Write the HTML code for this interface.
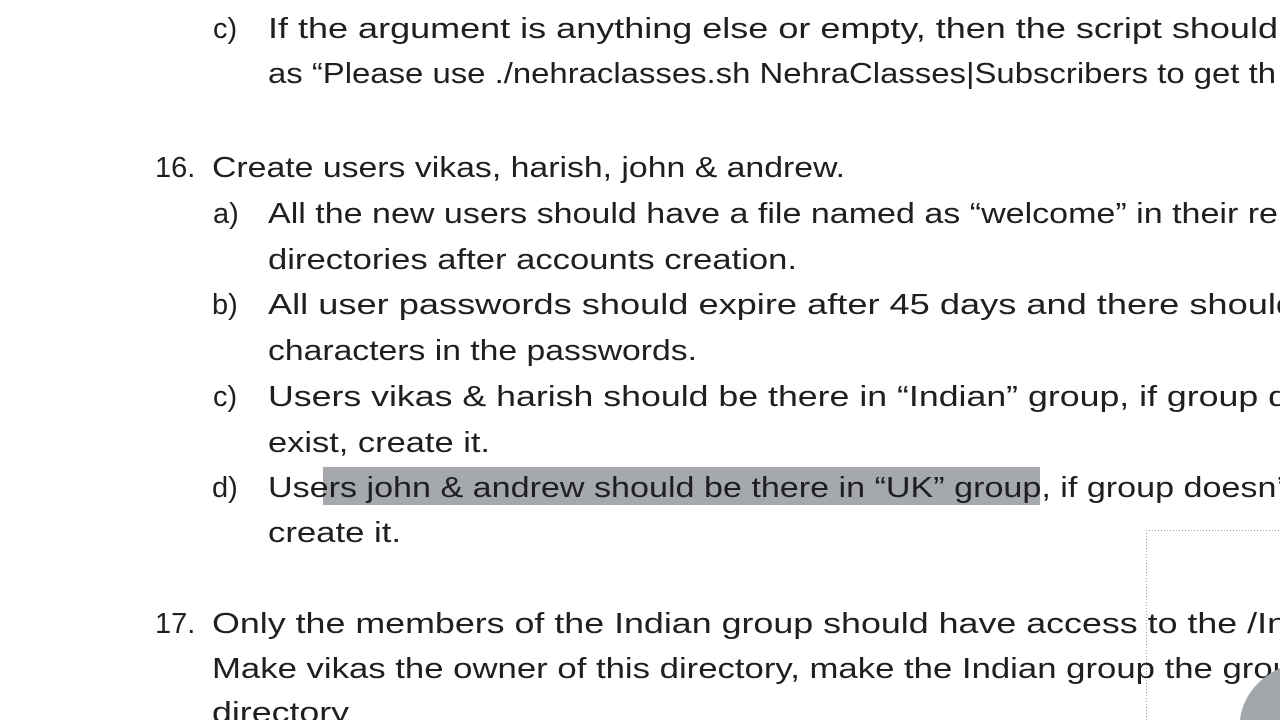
<!DOCTYPE html>
<html><head><meta charset="utf-8"><style>
html,body{margin:0;padding:0;background:#fff;width:1280px;height:720px;overflow:hidden}
svg{display:block}
text{font-family:"Liberation Sans",sans-serif;font-size:29px;fill:#1f1f1f}
</style></head><body>
<svg width="1280" height="720" viewBox="0 0 1280 720">
<rect x="323" y="467" width="717" height="38" fill="#a5a9ad"/>
<path d="M1146.5 720V530.5H1280" fill="none" stroke="#9aa0a6" stroke-dasharray="1 2"/>
<g>
<text x="213" y="38">c)</text>
<text x="268" y="38" textLength="1040" lengthAdjust="spacingAndGlyphs">If the argument is anything else or empty, then the script should g</text>
<text x="268" y="83" textLength="1008" lengthAdjust="spacingAndGlyphs">as “Please use ./nehraclasses.sh NehraClasses|Subscribers to get th</text>
<text x="155" y="177">16.</text>
<text x="212" y="177" textLength="633" lengthAdjust="spacingAndGlyphs">Create users vikas, harish, john &amp; andrew.</text>
<text x="213" y="223">a)</text>
<text x="268" y="223" textLength="1010" lengthAdjust="spacingAndGlyphs">All the new users should have a file named as “welcome” in their re</text>
<text x="268" y="269" textLength="529" lengthAdjust="spacingAndGlyphs">directories after accounts creation.</text>
<text x="212" y="314">b)</text>
<text x="268" y="314" textLength="1028" lengthAdjust="spacingAndGlyphs">All user passwords should expire after 45 days and there should</text>
<text x="268" y="360" textLength="429" lengthAdjust="spacingAndGlyphs">characters in the passwords.</text>
<text x="213" y="406">c)</text>
<text x="268" y="406" textLength="1020" lengthAdjust="spacingAndGlyphs">Users vikas &amp; harish should be there in “Indian” group, if group d</text>
<text x="268" y="452" textLength="222" lengthAdjust="spacingAndGlyphs">exist, create it.</text>
<text x="212" y="497">d)</text>
<text x="268" y="497" textLength="1016" lengthAdjust="spacingAndGlyphs">Users john &amp; andrew should be there in “UK” group, if group doesn’</text>
<text x="268" y="542" textLength="133" lengthAdjust="spacingAndGlyphs">create it.</text>
<text x="155" y="633">17.</text>
<text x="212" y="633" textLength="1075" lengthAdjust="spacingAndGlyphs">Only the members of the Indian group should have access to the /In</text>
<text x="212" y="678" textLength="1080" lengthAdjust="spacingAndGlyphs">Make vikas the owner of this directory, make the Indian group the grou</text>
<text x="212" y="722" textLength="137" lengthAdjust="spacingAndGlyphs">directory</text>
</g>
<path d="M1240 720 C1242 700 1255 680 1280 668 V720Z" fill="#a2a7ab"/>
</svg>
</body></html>
